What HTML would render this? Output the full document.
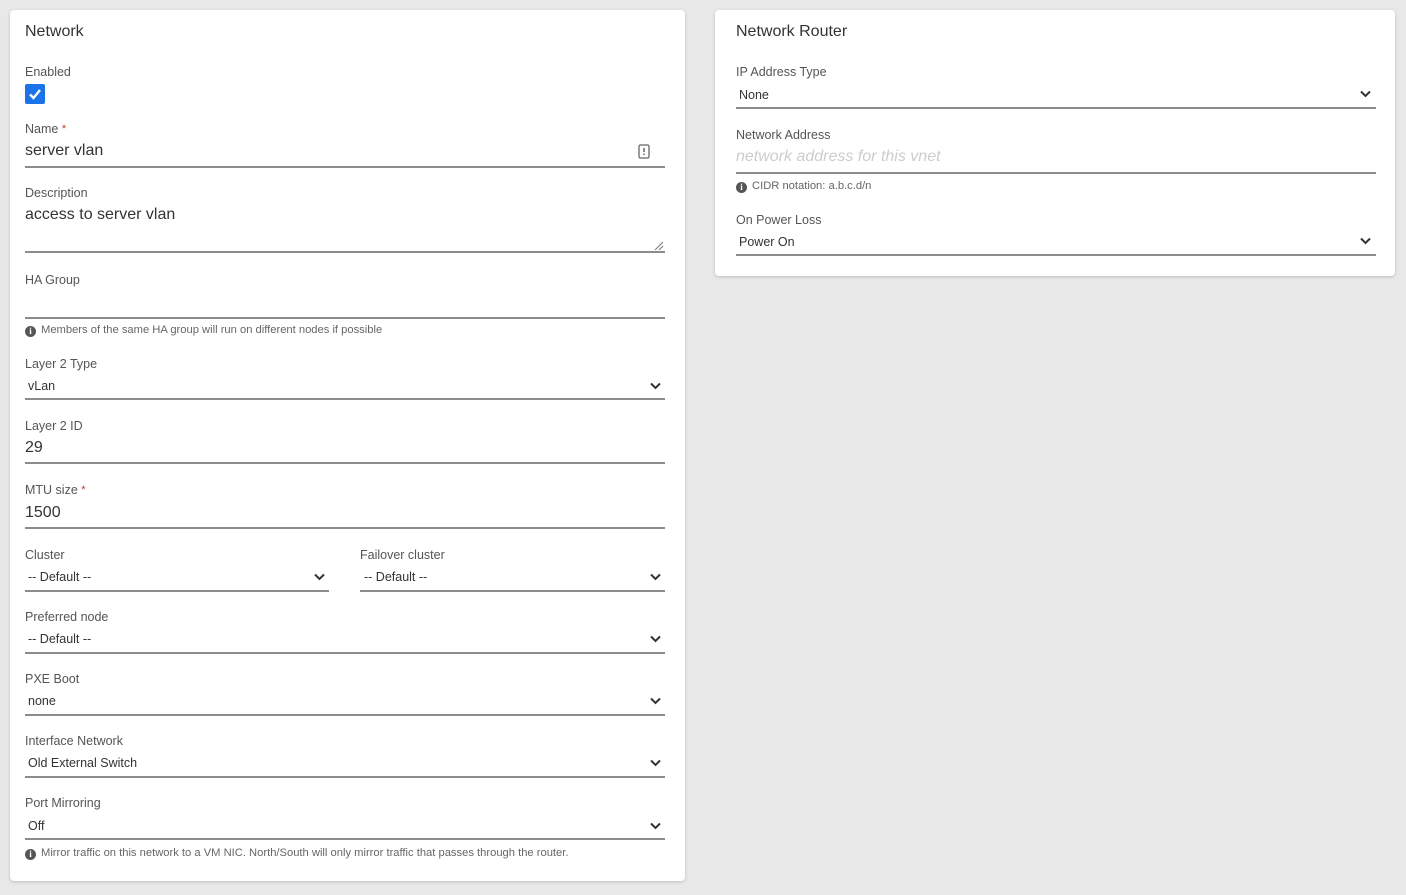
<!DOCTYPE html>
<html><head><meta charset="utf-8"><style>
body{margin:0;width:1406px;height:895px;background:#e8e8e8;font-family:"Liberation Sans",sans-serif;position:relative;overflow:hidden}
.card{position:absolute;background:#fff;border-radius:4px;box-shadow:0 1px 3px rgba(0,0,0,.18)}
.a{position:absolute;white-space:nowrap;margin-top:1px}
.t{font-size:16px;color:#333;margin-top:2px}
.l{font-size:12.5px;color:#555;line-height:14px}
.v{font-size:16px;color:#333;line-height:18px}
.s{font-size:12.5px;color:#333;line-height:14px}
.ln{position:absolute;height:2px;background:#8c8c8c}
.h{font-size:11.2px;color:#666;line-height:12px}
.req{color:#c0392b;font-size:11px;vertical-align:top}
.ic{display:inline-block;width:11px;height:11px;border-radius:50%;background:#555;color:#fff;font-size:9px;font-weight:bold;text-align:center;line-height:11px;margin-right:5px;vertical-align:-1px;font-family:"Liberation Serif",serif}
</style></head><body>
<div class="card" style="left:10px;top:10px;width:675px;height:871px"></div>
<div class="card" style="left:715px;top:10px;width:680px;height:266px"></div>

<div class="a t" style="left:25px;top:21px">Network</div>
<div class="a l" style="left:25px;top:64px">Enabled</div>
<div class="a" style="left:25px;top:83px;width:20px;height:20px;background:#1a73e8;border-radius:2px"><svg width="20" height="20"><path d="M5 10.5l3.5 3.5L15 6" stroke="#fff" stroke-width="2.4" fill="none"/></svg></div>

<div class="a l" style="left:25px;top:121px">Name <span class="req">*</span></div>
<div class="a v" style="left:25px;top:141px">server vlan</div>
<svg class="a" style="left:638px;top:143px" width="12" height="15"><rect x="1" y="1" width="10" height="13" rx="1.5" fill="none" stroke="#666" stroke-width="1.3"/><rect x="5.3" y="4" width="1.5" height="4" fill="#666"/><rect x="5.3" y="9.5" width="1.5" height="1.5" fill="#666"/></svg>
<div class="ln" style="left:25px;top:166px;width:640px"></div>

<div class="a l" style="left:25px;top:185px">Description</div>
<div class="a v" style="left:25px;top:205px">access to server vlan</div>
<svg class="a" style="left:654px;top:240px" width="10" height="10"><path d="M1 9L9 1M5 9L9 5" stroke="#777" stroke-width="1"/></svg>
<div class="ln" style="left:25px;top:251px;width:640px"></div>

<div class="a l" style="left:25px;top:272px">HA Group</div>
<div class="ln" style="left:25px;top:317px;width:640px"></div>
<div class="a h" style="left:25px;top:323px"><span class="ic">i</span>Members of the same HA group will run on different nodes if possible</div>

<div class="a l" style="left:25px;top:356px">Layer 2 Type</div>
<div class="a s" style="left:28px;top:378px">vLan</div>
<div class="ln" style="left:25px;top:398px;width:640px"></div>

<div class="a l" style="left:25px;top:418px">Layer 2 ID</div>
<div class="a v" style="left:25px;top:438px">29</div>
<div class="ln" style="left:25px;top:462px;width:640px"></div>

<div class="a l" style="left:25px;top:482px">MTU size <span class="req">*</span></div>
<div class="a v" style="left:25px;top:503px">1500</div>
<div class="ln" style="left:25px;top:527px;width:640px"></div>

<div class="a l" style="left:25px;top:547px">Cluster</div>
<div class="a s" style="left:28px;top:569px">-- Default --</div>
<div class="ln" style="left:25px;top:590px;width:304px"></div>
<div class="a l" style="left:360px;top:547px">Failover cluster</div>
<div class="a s" style="left:364px;top:569px">-- Default --</div>
<div class="ln" style="left:360px;top:590px;width:305px"></div>

<div class="a l" style="left:25px;top:609px">Preferred node</div>
<div class="a s" style="left:28px;top:631px">-- Default --</div>
<div class="ln" style="left:25px;top:652px;width:640px"></div>

<div class="a l" style="left:25px;top:671px">PXE Boot</div>
<div class="a s" style="left:28px;top:693px">none</div>
<div class="ln" style="left:25px;top:714px;width:640px"></div>

<div class="a l" style="left:25px;top:733px">Interface Network</div>
<div class="a s" style="left:28px;top:755px">Old External Switch</div>
<div class="ln" style="left:25px;top:776px;width:640px"></div>

<div class="a l" style="left:25px;top:795px">Port Mirroring</div>
<div class="a s" style="left:28px;top:818px">Off</div>
<div class="ln" style="left:25px;top:838px;width:640px"></div>
<div class="a h" style="left:25px;top:846px"><span class="ic">i</span>Mirror traffic on this network to a VM NIC. North/South will only mirror traffic that passes through the router.</div>

<div class="a t" style="left:736px;top:21px">Network Router</div>
<div class="a l" style="left:736px;top:64px">IP Address Type</div>
<div class="a s" style="left:739px;top:87px">None</div>
<div class="ln" style="left:736px;top:107px;width:640px"></div>
<div class="a l" style="left:736px;top:127px">Network Address</div>
<div class="a v" style="left:736px;top:147px;color:#ccc;font-style:italic">network address for this vnet</div>
<div class="ln" style="left:736px;top:172px;width:640px"></div>
<div class="a h" style="left:736px;top:179px"><span class="ic">i</span>CIDR notation: a.b.c.d/n</div>
<div class="a l" style="left:736px;top:212px">On Power Loss</div>
<div class="a s" style="left:739px;top:234px">Power On</div>
<div class="ln" style="left:736px;top:254px;width:640px"></div>

<svg width="0" height="0" style="position:absolute"><defs><path id="cv" d="M1 1.5l4.5 4.5 4.5-4.5" stroke="#333" stroke-width="2" fill="none"/></defs></svg>
<svg class="a" style="left:650px;top:381px" width="11" height="8"><use href="#cv"/></svg>
<svg class="a" style="left:314px;top:572px" width="11" height="8"><use href="#cv"/></svg>
<svg class="a" style="left:650px;top:572px" width="11" height="8"><use href="#cv"/></svg>
<svg class="a" style="left:650px;top:634px" width="11" height="8"><use href="#cv"/></svg>
<svg class="a" style="left:650px;top:696px" width="11" height="8"><use href="#cv"/></svg>
<svg class="a" style="left:650px;top:758px" width="11" height="8"><use href="#cv"/></svg>
<svg class="a" style="left:650px;top:821px" width="11" height="8"><use href="#cv"/></svg>
<svg class="a" style="left:1360px;top:89px" width="11" height="8"><use href="#cv"/></svg>
<svg class="a" style="left:1360px;top:236px" width="11" height="8"><use href="#cv"/></svg>
</body></html>
